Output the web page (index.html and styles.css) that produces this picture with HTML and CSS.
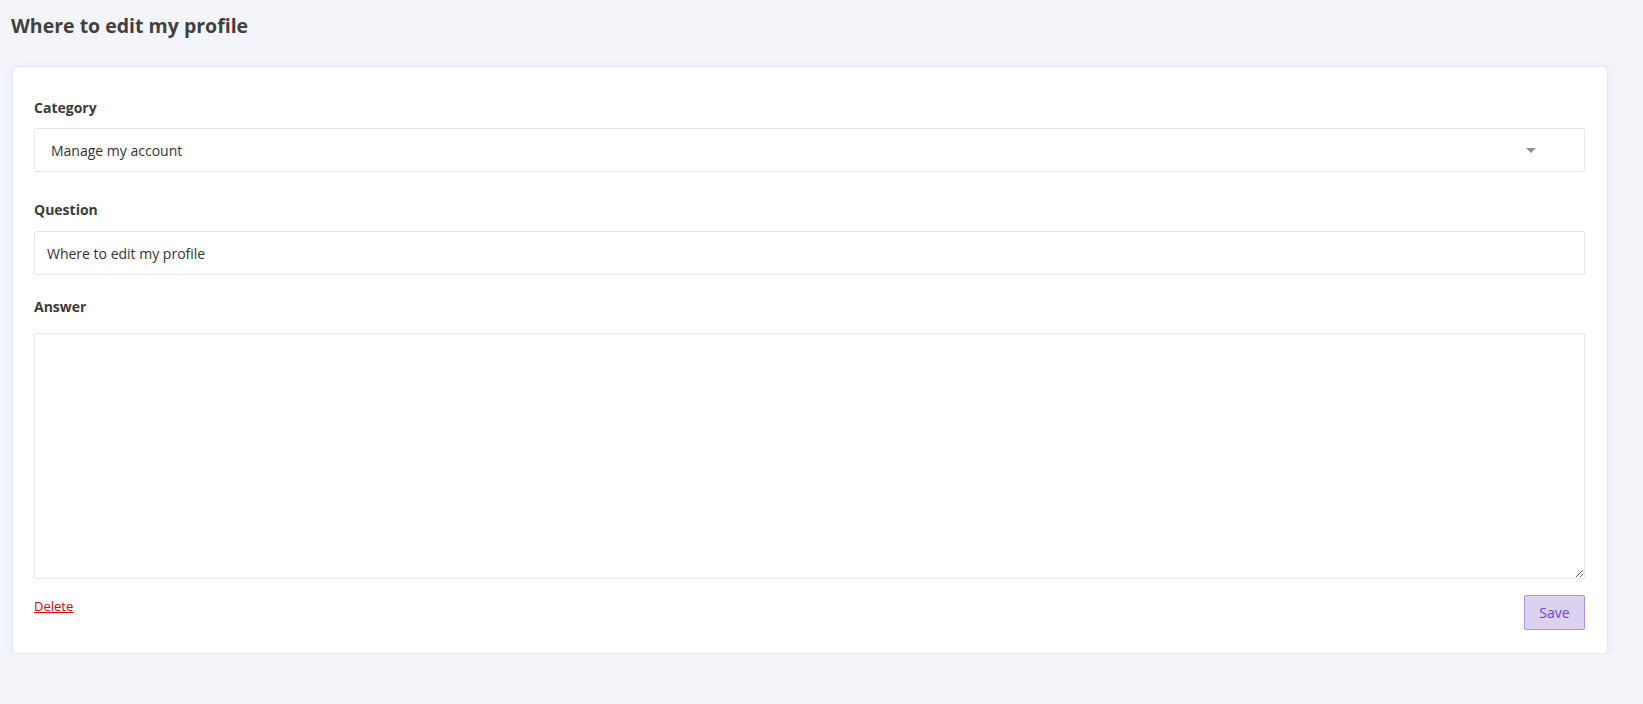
FILE: index.html
```html
<!DOCTYPE html>
<html lang="en">
<head>
  <meta charset="UTF-8">
  <title>Edit FAQ</title>
  <link rel="stylesheet" href="styles.css">
</head>
<body>

  <h1 class="page-title">Where to edit my profile</h1>

  <div class="card">
    <form class="faq-form">
      <label class="field-label" for="category">Category</label>
      <div class="select-wrap">
        <select id="category" class="field-input field-select">
          <option selected>Manage my account</option>
          <option>Billing</option>
          <option>Orders</option>
        </select>
      </div>

      <label class="field-label label-question" for="question">Question</label>
      <input type="text" id="question" class="field-input field-text" value="Where to edit my profile">

      <label class="field-label label-answer" for="answer">Answer</label>
      <textarea id="answer" class="field-input field-area"></textarea>

      <div class="form-actions">
        <a href="#" class="delete-link">Delete</a>
        <button type="button" class="save-btn">Save</button>
      </div>
    </form>
  </div>

</body>
</html>
```

FILE: styles.css
```css
body {
  margin: 0;
  padding: 0 35px 0 12px;
  background-color: #f4f5fa;
  font-family: "Open Sans", "Noto Sans", Arial, sans-serif;
  color: #3d3b3b;
}
.page-title {
  margin: 0 0 0 -1px;
  padding-top: 12px;
  font-size: 19.5px;
  line-height: 27px;
  font-weight: 700;
  color: #404040;
}
.card {
  margin-top: 27px;
  background: #fff;
  border: 1px solid #dfe5fa;
  border-radius: 4px;
  box-shadow: 0 2px 8px rgba(200, 208, 240, 0.35);
  padding: 31px 22px 23px 21px;
}
.faq-form {
  display: flex;
  flex-direction: column;
}
.field-label {
  display: block;
  font-size: 14px;
  line-height: 20px;
  font-weight: 700;
  color: #3b3b3b;
  margin-bottom: 10px;
}
.label-question {
  margin-top: 28px;
  margin-bottom: 11px;
}
.label-answer {
  margin-top: 22px;
  margin-bottom: 16px;
}
.field-input {
  box-sizing: border-box;
  width: 100%;
  border: 1px solid #e6e6e6;
  border-radius: 2px;
  background: #fff;
  font-family: "Open Sans", "Noto Sans", Arial, sans-serif;
  font-size: 14px;
  color: #333;
  outline: none;
}
.select-wrap {
  position: relative;
}
.select-wrap::after {
  content: "";
  position: absolute;
  right: 49px;
  top: 20px;
  border-left: 5px solid transparent;
  border-right: 5px solid transparent;
  border-top: 5px solid #8f8f8f;
  pointer-events: none;
}
.field-select {
  height: 44px;
  padding: 0 16px;
  appearance: none;
  -webkit-appearance: none;
}
.field-text {
  height: 44px;
  padding: 0 12px;
}
.field-area {
  height: 246px;
  padding: 10px 12px;
  resize: vertical;
  display: block;
}
.form-actions {
  display: flex;
  justify-content: space-between;
  align-items: flex-start;
  margin-top: 16px;
}
.delete-link {
  font-size: 13px;
  line-height: 18px;
  color: #dd0000;
  text-decoration: underline;
  margin-top: 2px;
}
.save-btn {
  width: 61px;
  height: 35px;
  background-color: #dcd1ef;
  border: 1px solid #ae92e2;
  border-radius: 2px;
  color: #6d45c4;
  font-family: "Open Sans", "Noto Sans", Arial, sans-serif;
  font-size: 14px;
  padding: 0;
}
```
